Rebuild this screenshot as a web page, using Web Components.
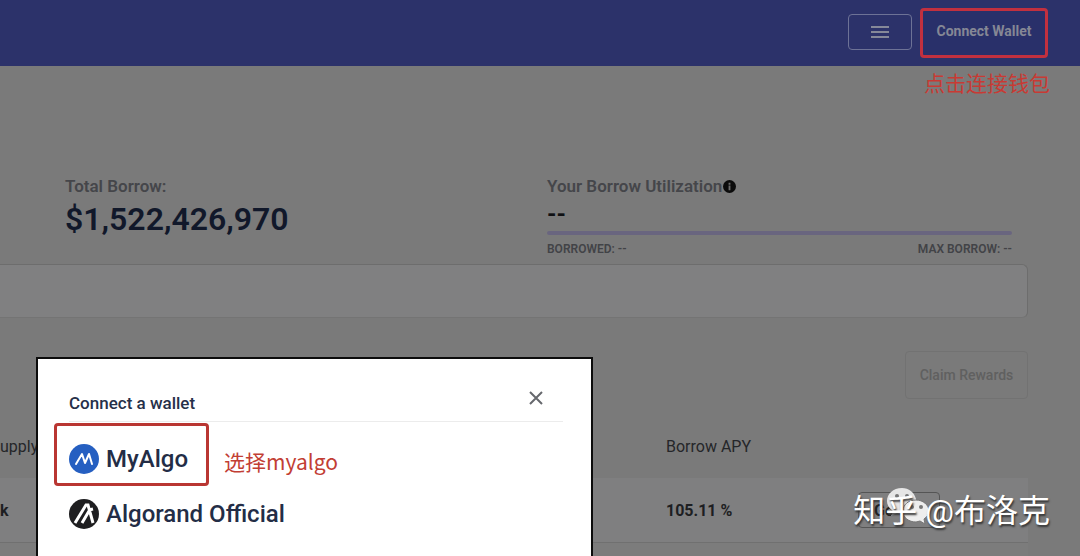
<!DOCTYPE html>
<html lang="en">
<head>
<meta charset="utf-8">
<title>Connect a wallet</title>
<style>
body {
  margin: 0;
  background: #7a7a7a;
  font-family: Roboto, "Noto Sans CJK SC", sans-serif;
}
</style>
</head>
<body>
<market-page>
  <top-bar slot="header"></top-bar>
  <div slot="stats">
    <stat-block label="Total Borrow:">$1,522,426,970</stat-block>
  </div>
  <borrow-usage slot="stats"></borrow-usage>
  <market-table slot="table"></market-table>
  <wallet-dialog slot="dialog">
    <wallet-option name="MyAlgo" note="选择myalgo" marked>
      <svg width="30" height="30" viewBox="0 0 30 30">
        <circle cx="15" cy="15" r="15" fill="#255fc1"/>
        <path d="M7 20L13 10L16 19L20 10L23 20" fill="none" stroke="#fff" stroke-width="2" stroke-linejoin="round" stroke-linecap="round"/>
      </svg>
    </wallet-option>
    <wallet-option name="Algorand Official">
      <svg width="30" height="30" viewBox="0 0 30 30">
        <circle cx="15" cy="15" r="15" fill="#1e1e20"/>
        <path d="M6 24L17 6H19L24 24M13 24L20 12M20 11L24 10" fill="none" stroke="#fff" stroke-width="3"/>
      </svg>
    </wallet-option>
  </wallet-dialog>
  <water-mark slot="mark">知乎 @布洛克</water-mark>
</market-page>

<script>
function define(name, html, setup) {
  const template = document.createElement('template');
  template.innerHTML = html;
  customElements.define(name, class extends HTMLElement {
    constructor() {
      super();
      this.attachShadow({mode: 'open'});
      this.shadowRoot.appendChild(template.content.cloneNode(true));
    }
    connectedCallback() {
      if (setup) setup(this, this.shadowRoot);
    }
  });
}

define('top-bar', `
  <style>
  :host {
    display: flex;
    justify-content: flex-end;
    height: 66px;
    padding: 0 32px;
    box-sizing: border-box;
    background: #2c326a;
  }
  .menu {
    width: 64px;
    height: 36px;
    margin: 14px 8px 0 0;
    padding: 0;
    border: 1px solid #6d7296;
    border-radius: 4px;
    background: none;
  }
  .menu svg {
    display: block;
    margin: auto;
  }
  .callout {
    display: flex;
    flex-direction: column;
    padding-top: 8px;
    width: 128px;
  }
  .connect {
    width: 128px;
    height: 50px;
    flex: none;
    padding: 0 0 4px;
    border: 3px solid #c2303f;
    border-radius: 4px;
    background: #29306a;
    color: #858795;
    font: 700 14px Roboto, sans-serif;
  }
  .note {
    margin-top: 10px;
    padding-left: 4px;
    color: #c83a34;
    font-size: 21px;
    line-height: 32px;
    white-space: nowrap;
  }
  </style>
  <button class="menu" aria-label="Menu">
    <svg width="18" height="14" viewBox="0 0 18 14"><path d="M0 2H18M0 7H18M0 12H18" stroke="#858899" stroke-width="2"/></svg>
  </button>
  <div class="callout">
    <button class="connect">Connect Wallet</button>
    <span class="note">点击连接钱包</span>
  </div>
`);

define('stat-block', `
  <style>
  :host { display: block; }
  .label {
    color: #45464a;
    font-size: 17px;
    font-weight: 600;
    line-height: 24px;
  }
  .value {
    color: #11182a;
    font-size: 32px;
    font-weight: 600;
    line-height: 43px;
  }
  </style>
  <div class="label"></div>
  <div class="value"><slot></slot></div>
`, (host, root) => {
  root.querySelector('.label').textContent = host.getAttribute('label');
});

define('borrow-usage', `
  <style>
  :host { display: block; }
  .label {
    display: flex;
    align-items: center;
    gap: 1px;
    color: #45464a;
    font-size: 17px;
    font-weight: 600;
    line-height: 24px;
  }
  .value {
    color: #101114;
    font-size: 24px;
    font-weight: 700;
    line-height: 33px;
  }
  .bar {
    height: 4px;
    border-radius: 2px;
    background: #69657f;
  }
  .limits {
    display: flex;
    justify-content: space-between;
    margin-top: 6px;
    color: #424347;
    font-size: 12px;
    font-weight: 600;
    line-height: 16px;
  }
  </style>
  <div class="label">Your Borrow Utilization
    <svg width="13" height="13" viewBox="0 0 14 14"><circle cx="7" cy="7" r="7" fill="#0b0b0b"/><path d="M7 3V5M7 6V11" stroke="#6c6c6c" stroke-width="2"/></svg>
  </div>
  <div class="value">--</div>
  <div class="bar"></div>
  <div class="limits"><span>BORROWED: --</span><span>MAX BORROW: --</span></div>
`);

define('market-table', `
  <style>
  :host { display: block; }
  table {
    width: 100%;
    border-collapse: collapse;
    table-layout: fixed;
    color: #1d1e22;
    font-size: 16px;
  }
  th, td {
    padding: 0;
    text-align: left;
  }
  th {
    height: 64px;
    color: #252629;
    font-weight: 400;
  }
  td {
    height: 64px;
    border-bottom: 1px solid #707070;
    background: #7f7f80;
    font-weight: 700;
  }
  .more td { background: #7c7c7c; }
  .apy { width: 192px; }
  .action { width: 170px; }
  button {
    display: block;
    width: 82px;
    height: 36px;
    border: 1px solid #555;
    border-radius: 4px;
    padding: 0 15px;
    background: none;
    color: #222;
    font: 700 16px Roboto, sans-serif;
    text-align: left;
  }
  </style>
  <table>
    <thead><tr><th>upply</th><th class="apy">Borrow APY</th><th class="action"></th></tr></thead>
    <tbody>
      <tr><td>k</td><td>105.11 %</td><td><button>Ge</button></td></tr>
      <tr class="more"><td></td><td></td><td></td></tr>
    </tbody>
  </table>
`);

define('wallet-option', `
  <style>
  :host {
    display: flex;
    align-items: center;
    gap: 15px;
    margin-left: -15px;
  }
  button {
    display: flex;
    align-items: center;
    gap: 7px;
    box-sizing: border-box;
    height: 46px;
    padding: 0 12px;
    border: 3px solid transparent;
    border-radius: 4px;
    background: none;
    color: #232d46;
    font: 500 24px Roboto, sans-serif;
    white-space: nowrap;
  }
  :host([marked]) button {
    width: 155px;
    height: 63px;
    padding-top: 8px;
    border-color: #b93632;
  }
  .note {
    color: #c23e34;
    font-family: "Noto Sans CJK SC", sans-serif;
    font-size: 21px;
    line-height: 32px;
    padding-top: 12px;
  }
  </style>
  <button><slot></slot><span class="name"></span></button>
  <span class="note"></span>
`, (host, root) => {
  root.querySelector('.name').textContent = host.getAttribute('name');
  root.querySelector('.note').textContent = host.getAttribute('note') || '';
});

define('wallet-dialog', `
  <style>
  :host {
    display: block;
    box-sizing: border-box;
    padding: 27px 28px 0 31px;
    border: 2px solid #0c0c0c;
    border-bottom: 0;
    background: #fff;
  }
  header {
    display: flex;
    justify-content: space-between;
    height: 35px;
    border-bottom: 1px solid #ececec;
  }
  h2 {
    margin: 4px 0 0;
    color: #263049;
    font-size: 17px;
    font-weight: 500;
    line-height: 26px;
  }
  button {
    width: 24px;
    height: 24px;
    margin-right: 15px;
    padding: 0;
    border: 0;
    background: none;
  }
  svg { display: block; margin: auto; }
  .list {
    display: flex;
    flex-direction: column;
    gap: 5px;
    padding-top: 1px;
  }
  </style>
  <header>
    <h2>Connect a wallet</h2>
    <button aria-label="Close"><svg width="14" height="14" viewBox="0 0 14 14"><path d="M1 1L13 13M13 1L1 13" stroke="#66686d" stroke-width="2"/></svg></button>
  </header>
  <div class="list"><slot></slot></div>
`);

// white bubbles of the chat logo sit behind the name
define('water-mark', `
  <style>
  :host {
    display: block;
    color: #fff;
    font-size: 32px;
    line-height: 40px;
    white-space: nowrap;
    text-shadow: 1px 2px 2px #333;
  }
  svg {
    position: absolute;
    left: 34px;
    top: -4px;
  }
  span { position: relative; }
  </style>
  <svg width="42" height="38" viewBox="0 0 42 38">
    <path d="M15 1C6 1 0 7 0 14C0 18 2 21 6 24L4 29L10 26C12 27 14 27 17 27C24 26 30 20 29 12C27 5 22 1 15 1Z" fill="#e6e6e6"/>
    <path d="M29 13C21 13 16 18 16 24C16 31 22 35 29 35L33 34L38 37L37 32C40 30 42 27 42 24C42 18 36 13 29 13Z" fill="#eee" stroke="#777"/>
    <g fill="#777"><circle cx="10" cy="9" r="2"/><circle cx="20" cy="9" r="2"/><circle cx="25" cy="20" r="2"/><circle cx="34" cy="20" r="2"/></g>
  </svg>
  <span><slot></slot></span>
`);

define('market-page', `
  <style>
  :host {
    display: block;
    position: relative;
    height: 100vh;
    overflow: hidden;
  }
  main { padding: 108px 52px 0 0; }
  .stats {
    display: grid;
    grid-template-columns: 1fr 465px;
    padding: 0 16px 0 65px;
  }
  .panel {
    height: 52px;
    margin-top: 7px;
    border: 1px solid #6d6d6d;
    border-left: 0;
    border-bottom-color: #747474;
    border-radius: 0 6px 6px 0;
    background: #808081;
  }
  .rewards {
    display: flex;
    justify-content: flex-end;
    padding: 33px 0 15px;
  }
  .rewards button {
    width: 123px;
    height: 48px;
    border: 1px solid #727272;
    border-radius: 4px;
    background: none;
    color: #606060;
    font: 500 14px Roboto, sans-serif;
  }
  .dialog {
    position: absolute;
    left: 36px;
    top: 357px;
    bottom: 0;
    width: 557px;
    display: grid;
  }
  .mark {
    position: absolute;
    right: 30px;
    bottom: 25px;
  }
  </style>
  <slot name="header"></slot>
  <main>
    <div class="stats"><slot name="stats"></slot></div>
    <div class="panel"></div>
    <div class="rewards"><button disabled>Claim Rewards</button></div>
    <slot name="table"></slot>
  </main>
  <div class="dialog"><slot name="dialog"></slot></div>
  <div class="mark"><slot name="mark"></slot></div>
`);
</script>
</body>
</html>
